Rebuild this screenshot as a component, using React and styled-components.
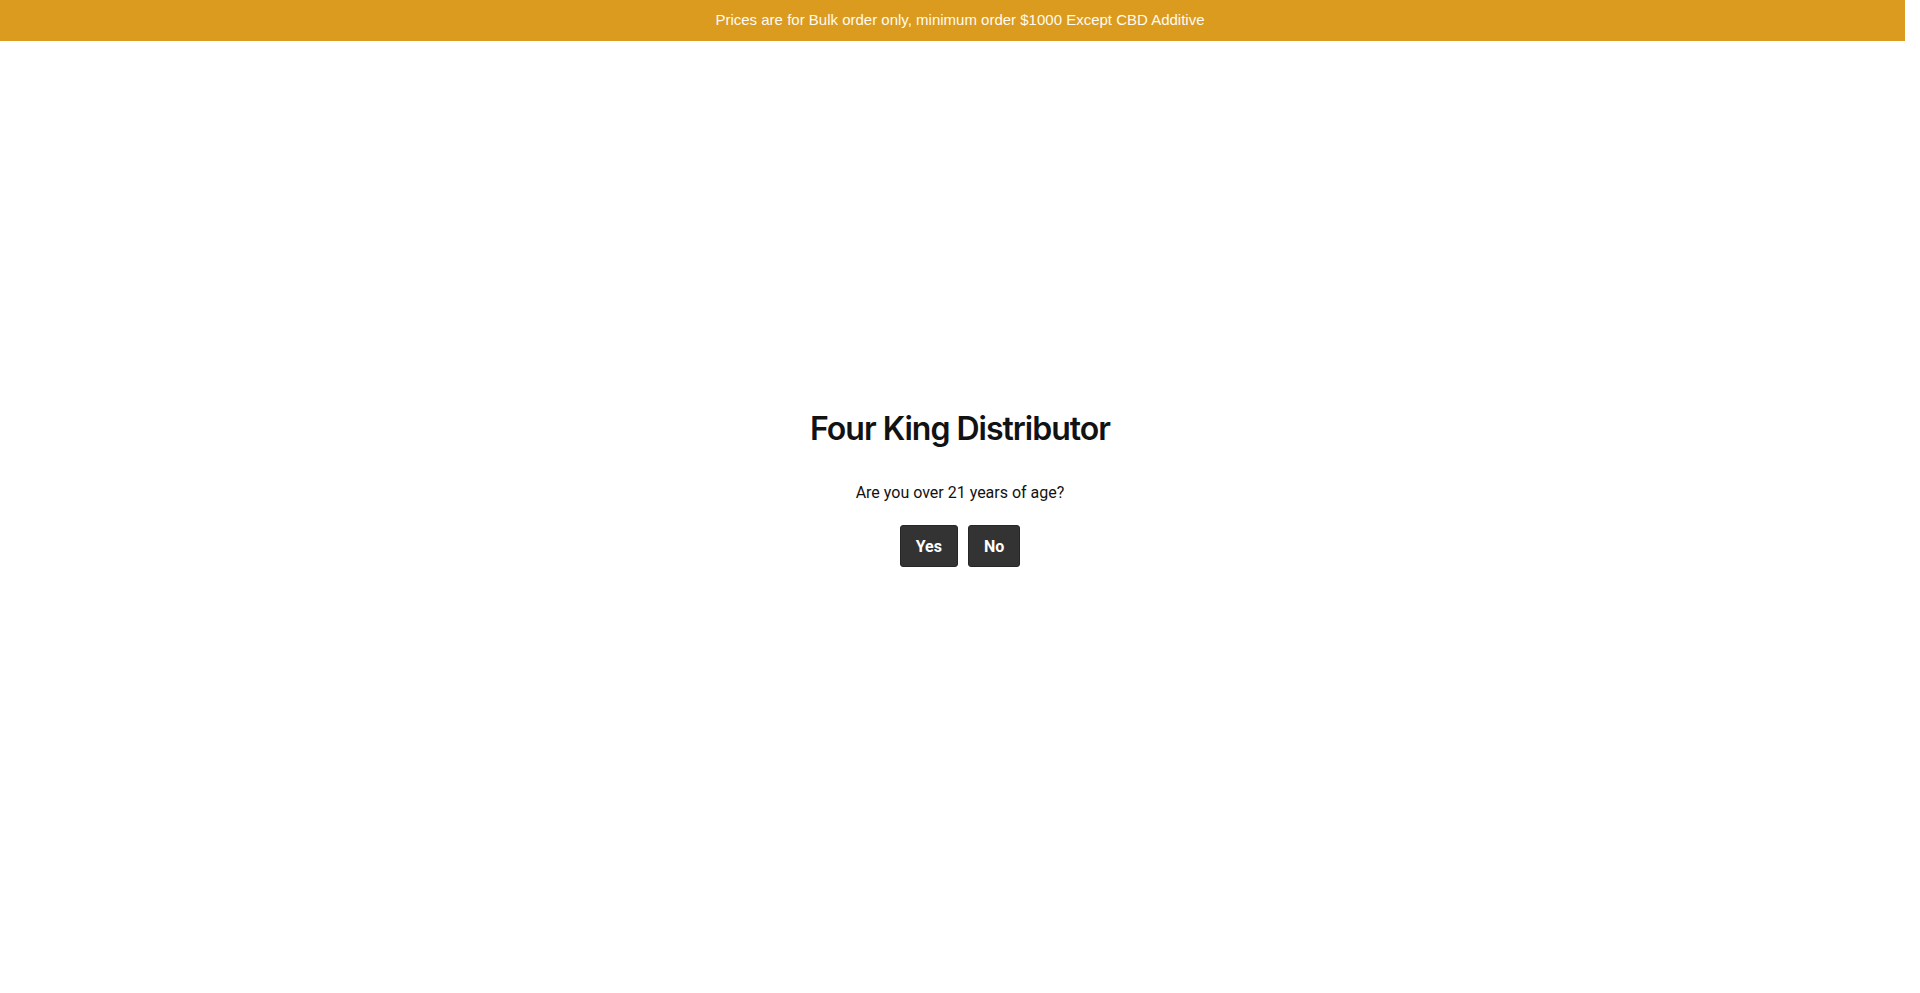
import React from "react";
import styled, { createGlobalStyle } from "styled-components";

const GlobalStyle = createGlobalStyle`
  html, body {
    margin: 0;
    padding: 0;
    background: #ffffff;
  }
  body {
    font-family: Roboto, "Liberation Sans", Arial, sans-serif;
    color: #111111;
  }
  * { box-sizing: border-box; }
`;

const Page = styled.div`
  width: 1920px;
  min-height: 993px;
  display: flex;
  flex-direction: column;
`;

const Announcement = styled.div`
  width: 1905px;
  height: 41px;
  background: #db9b1e;
  display: flex;
  align-items: center;
  justify-content: center;
  padding: 0 0 3px 15px;
  font-family: "Liberation Sans", Arial, sans-serif;
  font-size: 15px;
  color: #fffaf0;
`;

const Gate = styled.main`
  display: flex;
  flex-direction: column;
  align-items: center;
  padding-top: 369px;
`;

const Title = styled.h1`
  margin: 0;
  font-family: Inter, "Noto Sans", sans-serif;
  font-size: 32px;
  font-weight: 600;
  line-height: 1.2;
  letter-spacing: -1px;
  color: #121212;
`;

const Question = styled.p`
  margin: 33px 0 0;
  font-family: Roboto, sans-serif;
  font-size: 16px;
  line-height: 24px;
  color: #121212;
`;

const Actions = styled.div`
  display: flex;
  gap: 10px;
  margin-top: 20px;
`;

const Choice = styled.button`
  height: 42px;
  padding: 0 15px;
  background: #333333;
  border: 1px solid #262626;
  border-radius: 3px;
  font-family: Roboto, sans-serif;
  font-size: 16px;
  font-weight: 700;
  color: #ffffff;
  cursor: pointer;
`;

export default function App() {
  return (
    <Page>
      <GlobalStyle />
      <Announcement>
        Prices are for Bulk order only, minimum order $1000 Except CBD Additive
      </Announcement>
      <Gate>
        <Title>Four King Distributor</Title>
        <Question>Are you over 21 years of age?</Question>
        <Actions>
          <Choice>Yes</Choice>
          <Choice>No</Choice>
        </Actions>
      </Gate>
    </Page>
  );
}
